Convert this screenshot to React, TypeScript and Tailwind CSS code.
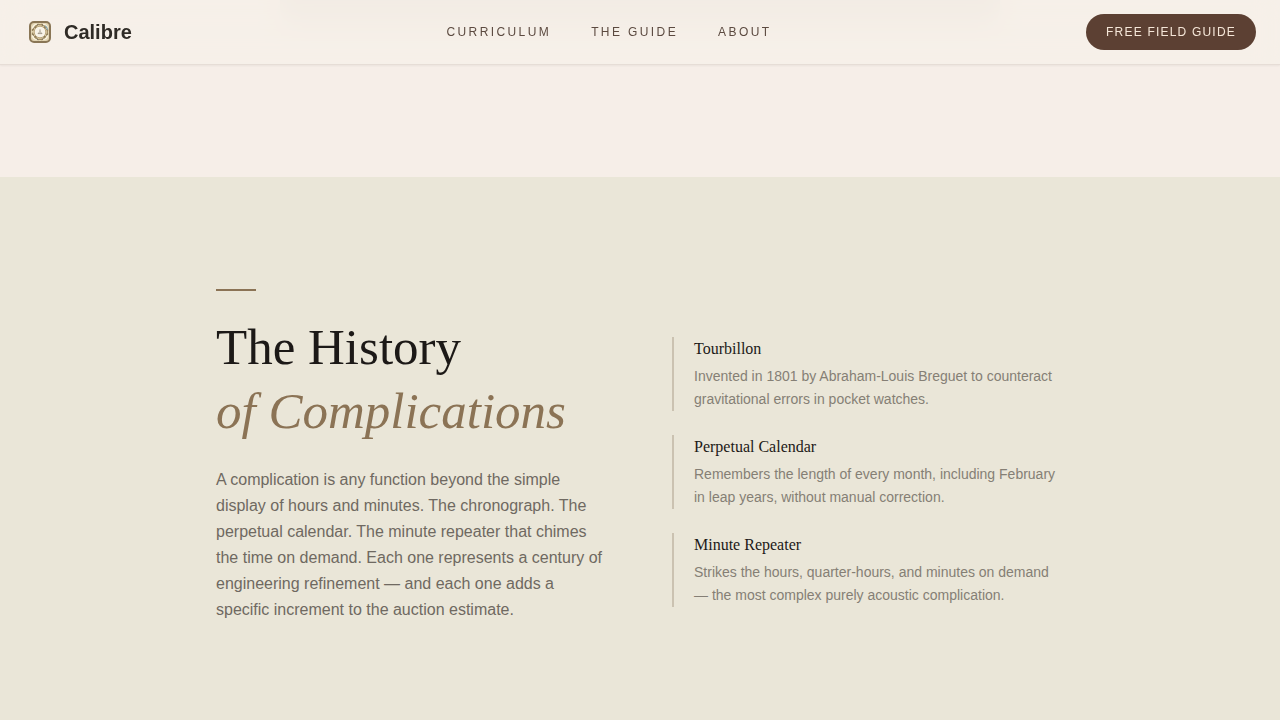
interface Complication {
    name: string;
    description: string;
}

const navLinks = [
    { label: 'Curriculum', href: '#curriculum' },
    { label: 'The Guide', href: '#guide' },
    { label: 'About', href: '#about' },
];

const complications: Complication[] = [
    {
        name: 'Tourbillon',
        description: 'Invented in 1801 by Abraham-Louis Breguet to counteract gravitational errors in pocket watches.',
    },
    {
        name: 'Perpetual Calendar',
        description: 'Remembers the length of every month, including February in leap years, without manual correction.',
    },
    {
        name: 'Minute Repeater',
        description: 'Strikes the hours, quarter-hours, and minutes on demand — the most complex purely acoustic complication.',
    },
];

const LogoMark = () => (
    <svg viewBox="0 0 32 32" className="h-8 w-8" fill="none" aria-hidden="true">
        <rect x="6" y="6" width="20" height="20" rx="4" fill="#e3d5b3" stroke="#8a7656" strokeWidth="2" />
        {/* interlaced strapwork between the frame and the dial */}
        <path
            d="M8.5 13.5c0-3 2-5 5-5M18.5 8.5c3 0 5 2 5 5M23.5 18.5c0 3-2 5-5 5M13.5 23.5c-3 0-5-2-5-5"
            stroke="#faf3e2"
            strokeWidth="1.4"
        />
        <path
            d="M8 14.5 14.5 8M17.5 8l6.5 6.5M8 17.5l6.5 6.5M24 17.5 17.5 24"
            stroke="#75674c"
            strokeWidth="1.3"
            strokeDasharray="2.6 1"
        />
        <circle cx="16" cy="16" r="7.4" stroke="#a08a60" strokeWidth="1.1" strokeDasharray="3.4 1.4" />
        <circle cx="16" cy="16" r="5.8" fill="#f8f3e8" stroke="#b7a074" strokeWidth="0.9" />
        <path d="M21.2 9.8c1.4 1.1 2.2 2.6 2.4 4" stroke="#86a3aa" strokeWidth="1.2" />
        <path d="M16 13.4v2.2M14 17.6h4M16 15.6l-2 2M16 15.6l2 2" stroke="#8f8677" strokeWidth="0.8" />
    </svg>
);

const Navbar = () => (
    <header className="fixed inset-x-0 top-0 z-10 border-b border-[#e6ddd6] bg-[#f6f0e8]/80 shadow-xs backdrop-blur-md">
        <nav className="flex h-16 items-center justify-between px-6">
            <a href="#top" className="flex items-center gap-2">
                <LogoMark />
                <span className="text-xl font-bold text-[#2f2b26]">Calibre</span>
            </a>
            <div className="flex items-center gap-10">
                {navLinks.map((link) => (
                    <a key={link.label} href={link.href} className="text-xs tracking-[0.2em] text-[#5c4a40] uppercase">
                        {link.label}
                    </a>
                ))}
            </div>
            <button type="button" className="h-9 rounded-full bg-[#5c4033] px-5 text-xs tracking-widest text-[#f5e6d8] uppercase">
                Free Field Guide
            </button>
        </nav>
    </header>
);

const HistorySection = () => (
    <section className="bg-[#eae6d8] py-28">
        <div className="mx-auto grid max-w-4xl grid-cols-2 gap-16 px-6">
            <div>
                <div className="mb-6 h-0.5 w-10 bg-[#8b7355]" />
                <h2 className="mb-6 font-['Liberation_Serif',serif] text-[51px] leading-[64px] text-[#1c1917]">
                    The History
                    <br />
                    <em className="text-[#8b7355]">of Complications</em>
                </h2>
                <p className="text-base leading-[26px] text-[#6f6961]">
                    A complication is any function beyond the simple display of hours and minutes. The chronograph. The
                    perpetual calendar. The minute repeater that chimes the time on demand. Each one represents a century of
                    engineering refinement — and each one adds a specific increment to the auction estimate.
                </p>
            </div>
            <div className="flex flex-col gap-6 pt-12">
                {complications.map((item) => (
                    <article key={item.name} className="border-l-2 border-[#cbc2b1] pl-5">
                        <h3 className="mb-1 font-['Liberation_Serif',serif] text-base text-[#1c1917]">{item.name}</h3>
                        <p className="text-sm leading-[23px] text-[#857f75]">{item.description}</p>
                    </article>
                ))}
            </div>
        </div>
    </section>
);

const App = () => (
    <div id="top" className="min-h-screen overflow-x-hidden bg-[#f6eee8] font-['Liberation_Sans',sans-serif]">
        <Navbar />
        {/* tail of the hero, its panel shows softly through the navbar */}
        <div className="px-6 pb-[153px]">
            <div className="mx-auto h-6 max-w-[720px] rounded-b-2xl bg-[#e2dcd5]" />
        </div>
        <HistorySection />
    </div>
);

export default App;
